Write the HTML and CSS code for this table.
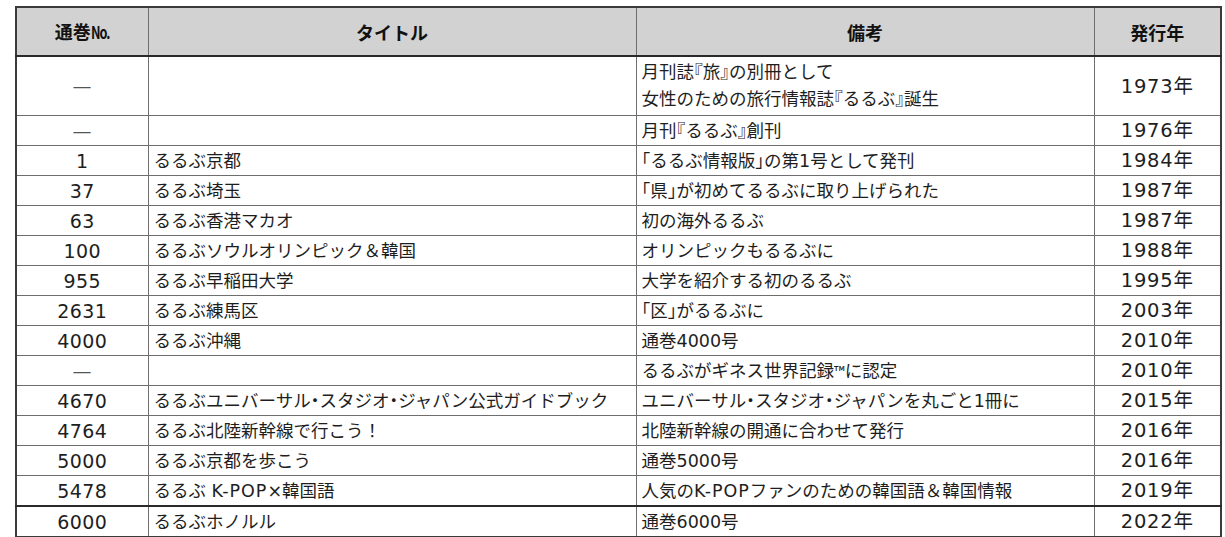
FILE: index.html
```html
<!DOCTYPE html>
<html lang="ja">
<head>
<meta charset="utf-8">
<title>るるぶ 年表</title>
<link rel="stylesheet" href="styles.css">
</head>
<body>
<table class="hist">
  <colgroup>
    <col class="c-no"><col class="c-title"><col class="c-note"><col class="c-year">
  </colgroup>
  <thead>
    <tr class="head">
      <th>通巻<span class="no">No.</span></th>
      <th>タイトル</th>
      <th>備考</th>
      <th>発行年</th>
    </tr>
  </thead>
  <tbody>
    <tr class="tall"><td class="num dash">—</td><td></td><td>月刊誌『旅』の別冊として<br>女性のための旅行情報誌『るるぶ』誕生</td><td class="num year">1973年</td></tr>
    <tr><td class="num dash">—</td><td></td><td>月刊『るるぶ』創刊</td><td class="num year">1976年</td></tr>
    <tr><td class="num">1</td><td>るるぶ京都</td><td>「るるぶ情報版」の第1号として発刊</td><td class="num year">1984年</td></tr>
    <tr><td class="num">37</td><td>るるぶ埼玉</td><td>「県」が初めてるるぶに取り上げられた</td><td class="num year">1987年</td></tr>
    <tr><td class="num">63</td><td>るるぶ香港マカオ</td><td>初の海外るるぶ</td><td class="num year">1987年</td></tr>
    <tr><td class="num">100</td><td>るるぶソウルオリンピック<span class="fw">＆</span>韓国</td><td>オリンピックもるるぶに</td><td class="num year">1988年</td></tr>
    <tr><td class="num">955</td><td>るるぶ早稲田大学</td><td>大学を紹介する初のるるぶ</td><td class="num year">1995年</td></tr>
    <tr><td class="num">2631</td><td>るるぶ練馬区</td><td>「区」がるるぶに</td><td class="num year">2003年</td></tr>
    <tr><td class="num">4000</td><td>るるぶ沖縄</td><td>通巻4000号</td><td class="num year">2010年</td></tr>
    <tr><td class="num dash">—</td><td></td><td>るるぶがギネス世界記録<span class="tm">™</span>に認定</td><td class="num year">2010年</td></tr>
    <tr><td class="num">4670</td><td>るるぶユニバーサル・スタジオ・ジャパン公式ガイドブック</td><td>ユニバーサル・スタジオ・ジャパンを丸ごと1冊に</td><td class="num year">2015年</td></tr>
    <tr><td class="num">4764</td><td>るるぶ北陸新幹線で行こう<span class="fw">！</span></td><td>北陸新幹線の開通に合わせて発行</td><td class="num year">2016年</td></tr>
    <tr><td class="num">5000</td><td>るるぶ京都を歩こう</td><td>通巻5000号</td><td class="num year">2016年</td></tr>
    <tr><td class="num">5478</td><td>るるぶ <span class="lat">K-POP</span>×韓国語</td><td>人気の<span class="lat">K-POP</span>ファンのための韓国語<span class="fw">＆</span>韓国情報</td><td class="num year">2019年</td></tr>
    <tr class="last"><td class="num">6000</td><td>るるぶホノルル</td><td>通巻6000号</td><td class="num year">2022年</td></tr>
  </tbody>
</table>
</body>
</html>
```

FILE: styles.css
```css
html, body {
  margin: 0;
  padding: 0;
  background: #ffffff;
}

body {
  font-family: "DejaVu Sans", "Noto Sans CJK JP", sans-serif;
  color: #1e1e1e;
}

.hist {
  margin: 6px 0 0 15px;
  width: 1205px;
  table-layout: fixed;
  border-collapse: collapse;
  border: 2px solid #3a3a3a;
}

.c-no { width: 132px; }
.c-title { width: 488px; }
.c-note { width: 458px; }
.c-year { width: 127px; }

.hist th,
.hist td {
  border: 1.5px solid #6e6e6e;
  padding: 0 0 0 5px;
  line-height: 22px;
  height: 29px;
  text-align: left;
  vertical-align: middle;
  white-space: nowrap;
  font-weight: normal;
}

.hist td {
  font-family: "DejaVu Sans", "Noto Sans CJK JP", sans-serif;
  font-size: 17.5px;
  font-feature-settings: "halt" 1;
  letter-spacing: 0;
}

.hist td .fw {
  font-family: "Noto Sans CJK JP", sans-serif;
  font-feature-settings: normal;
}

.hist td .tm {
  font-family: "Noto Sans CJK JP", sans-serif;
  font-size: 15px;
}

.hist td .lat {
  letter-spacing: 1px;
}

.hist td.num {
  font-size: 19px;
  text-align: center;
  padding: 0;
  letter-spacing: 0.4px;
  font-feature-settings: normal;
}

.hist td.year {
  font-size: 19.5px;
  letter-spacing: 0.8px;
}

.hist td.dash {
  color: #555;
}

.head th {
  background: #d2d2d2;
  height: 47px;
  text-align: center;
  padding: 0;
  font-family: "Noto Sans CJK JP", sans-serif;
  font-weight: 700;
  font-size: 18px;
  color: #111;
  border-bottom: 2px solid #2a2a2a;
}

.head .no {
  display: inline-block;
  font-size: 17px;
  letter-spacing: -1.5px;
  transform: scaleX(0.75);
  transform-origin: left center;
  margin-right: -5px;
}

.tall td {
  height: 58px;
  line-height: 27px;
}

.last td {
  border-top: 2px solid #2a2a2a;
}
```
